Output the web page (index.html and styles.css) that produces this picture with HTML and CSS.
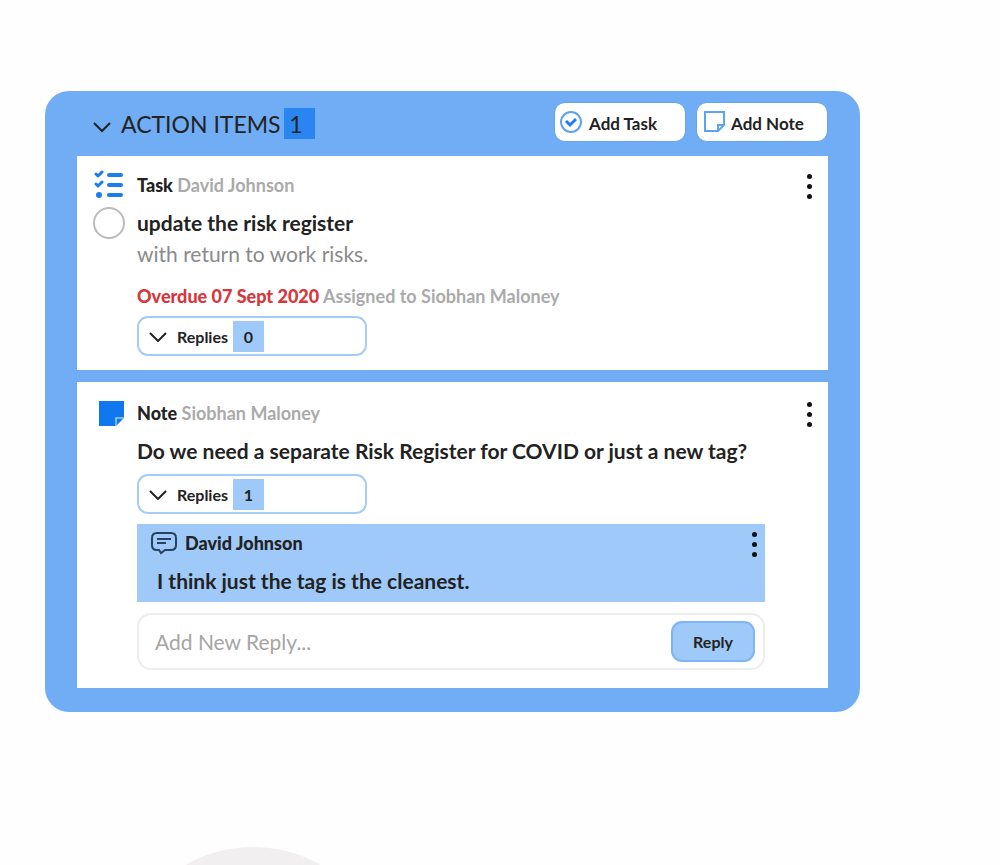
FILE: index.html
```
<!DOCTYPE html>
<html lang="en">
<head>
  <meta charset="UTF-8" />
  <meta name="viewport" content="width=device-width, initial-scale=1.0"/>
  <title>Action Items</title>
  <link rel="stylesheet" href="styles.css">
</head>
<body>

  <main class="panel">
    <header class="panel-header">
      <button class="toggle" aria-label="Collapse action items">
        <svg width="18" height="12" viewBox="0 0 18 12"><path d="M1 2 L9 10 L17 2"/></svg>
      </button>
      <h1>ACTION ITEMS</h1>
      <span class="count count-total">1</span>
      <div class="actions">
        <button class="add-btn">
          <svg class="outline" width="24" height="24" viewBox="0 0 24 24">
            <circle cx="12" cy="11" r="10"/>
            <path class="thick" d="M7 10 L11 14 L17 8"/>
          </svg>
          Add Task
        </button>
        <button class="add-btn">
          <svg class="outline" width="24" height="24" viewBox="0 0 24 24">
            <path d="M4 1 H23 V14 L17 20 H4 Z"/>
            <path d="M17 20 V14 H23"/>
          </svg>
          Add Note
        </button>
      </div>
    </header>

    <!-- Task -->
    <section class="card">
      <svg class="card-icon" width="30" height="30" viewBox="0 0 30 30">
        <g fill="none" stroke="#1a7df0" stroke-linecap="round" stroke-linejoin="round">
          <path stroke-width="3" d="M2 4 L4 6 L8 2 M2 14 L4 16 L8 12"/>
          <path stroke-width="4" d="M15 5 H27 M15 15 H27 M15 25 H27"/>
        </g>
        <circle cx="5" cy="25" r="3" fill="#1a7df0"/>
      </svg>
      <div class="byline"><b>Task</b> David Johnson</div>
      <button class="menu" aria-label="Task menu"><i></i><i></i><i></i></button>

      <input type="checkbox" class="done" id="task1">
      <label class="title" for="task1">update the risk register</label>
      <p class="desc">with return to work risks.</p>
      <p class="due"><b>Overdue 07 Sept 2020</b> Assigned to Siobhan Maloney</p>
      <button class="replies">
        <svg width="18" height="12" viewBox="0 0 18 12"><path d="M1 3 L9 11 L17 3"/></svg>
        Replies <span class="count">0</span>
      </button>
    </section>

    <!-- Note -->
    <section class="card card-note">
      <svg class="card-icon" width="30" height="30" viewBox="0 0 30 30">
        <path fill="#0f78ef" d="M5 3 H30 V20 L22 28 H5 Z"/>
        <path fill="none" stroke="#9fc9f8" stroke-width="1.5" d="M22 28 V20 H30"/>
      </svg>
      <div class="byline"><b>Note</b> Siobhan Maloney</div>
      <button class="menu" aria-label="Note menu"><i></i><i></i><i></i></button>

      <h2 class="title">Do we need a separate Risk Register for COVID or just a new tag?</h2>
      <button class="replies">
        <svg width="18" height="12" viewBox="0 0 18 12"><path d="M1 3 L9 11 L17 3"/></svg>
        Replies <span class="count">1</span>
      </button>

      <article class="reply">
        <div class="reply-head">
          <svg width="26" height="24" viewBox="0 0 26 24">
            <path d="M6 2 H20 Q25 2 25 7 V14 Q25 19 20 19 H14 L10 22 L8 19 H6 Q1 19 1 14 V7 Q1 2 6 2 Z"/>
            <path d="M6 8 H20 M6 12 H15"/>
          </svg>
          <b>David Johnson</b>
          <button class="menu" aria-label="Reply menu"><i></i><i></i><i></i></button>
        </div>
        <p>I think just the tag is the cleanest.</p>
      </article>

      <form class="new-reply">
        <input type="text" placeholder="Add New Reply..." aria-label="Add new reply">
        <button type="button">Reply</button>
      </form>
    </section>
  </main>

  <footer class="footer">
    <div class="circle"></div>
  </footer>

</body>
</html>
```
FILE: styles.css
```
* {
  box-sizing: border-box;
}

body {
  display: flex;
  flex-direction: column;
  min-height: 100vh;
  margin: 0;
  background: #fefefe;
  color: #222;
  font-family: Lato, "Liberation Sans", sans-serif;
}

h1, h2, p {
  margin: 0;
}

button {
  padding: 0;
  border: none;
  background: none;
  color: inherit;
  font-family: inherit;
  cursor: pointer;
}

.panel {
  margin: 91px 140px 0 45px;
  padding: 0 32px 24px;
  border-radius: 24px;
  background: #70adf4;
}

.panel-header {
  display: flex;
  align-items: center;
  height: 65px;
  padding-left: 16px;
}

.toggle svg,
.replies svg,
.reply-head svg {
  display: block;
  fill: none;
  stroke: #222;
  stroke-width: 2;
}

.reply-head svg {
  stroke: #26425f;
}

.toggle {
  padding-top: 6px;
}

h1 {
  margin-left: 10px;
  font-size: 23px;
  font-weight: 400;
}

.count {
  display: flex;
  align-items: center;
  justify-content: center;
  width: 31px;
  height: 31px;
  background: #9fc9f8;
  font-weight: 700;
}

.count-total {
  margin-left: 3px;
  padding-right: 6px;
  background: #2986f0;
  font-size: 23px;
  font-weight: 400;
}

.actions {
  display: flex;
  gap: 10px;
  margin-left: auto;
  padding-bottom: 4px;
}

.add-btn {
  display: flex;
  align-items: center;
  gap: 6px;
  width: 132px;
  height: 40px;
  padding: 3px 0 0 4px;
  border: 1px solid #64a5f3;
  border-radius: 11px;
  background: #fff;
  font-size: 17px;
  font-weight: 700;
}

.outline {
  fill: none;
  stroke: #5ea2f5;
  stroke-width: 2;
}

.outline .thick {
  stroke: #1a7df0;
  stroke-width: 3;
}

.card {
  display: grid;
  grid-template-columns: 60px 1fr 63px;
  padding: 12px 0 14px;
  background: #fff;
}

.card-note {
  margin-top: 12px;
  padding: 14px 0 18px;
}

.card-icon {
  align-self: center;
  margin-left: 17px;
}

.byline {
  color: #aaa;
  font-size: 18px;
  font-weight: 700;
  line-height: 34px;
}

.byline b {
  color: #222;
  font-weight: 900;
}

.menu {
  display: flex;
  flex-direction: column;
  align-items: center;
  justify-content: center;
  gap: 5px;
  width: 10px;
  margin-left: auto;
  margin-right: 14px;
  padding-top: 2px;
}

.menu i {
  width: 5px;
  height: 5px;
  border-radius: 50%;
  background: #111;
}

.done {
  appearance: none;
  align-self: center;
  width: 32px;
  height: 32px;
  margin: 4px 0 0 16px;
  border: 2px solid #bbb;
  border-radius: 50%;
}

.title {
  grid-column: 2 / 4;
  margin-top: 4px;
  font-size: 21px;
  font-weight: 700;
  line-height: 34px;
}

.desc,
.due,
.replies,
.reply,
.new-reply {
  grid-column: 2;
}

.desc {
  color: #8a8a8a;
  font-size: 21px;
  line-height: 28px;
}

.due {
  margin-top: 14px;
  color: #aaa;
  font-size: 18px;
  font-weight: 700;
  line-height: 28px;
}

.due b {
  color: #d8363b;
  font-weight: 900;
}

.replies {
  display: flex;
  align-items: center;
  width: 230px;
  height: 40px;
  margin-top: 6px;
  padding-left: 10px;
  border: 2px solid #a6ccfa;
  border-radius: 11px;
  font-size: 16px;
  font-weight: 700;
}

.replies svg {
  margin-right: 10px;
}

.replies .count {
  margin-left: 5px;
}

.reply {
  height: 78px;
  margin-top: 10px;
  padding-left: 14px;
  background: #9fc9f8;
  font-weight: 700;
}

.reply-head {
  display: flex;
  align-items: center;
  height: 38px;
}

.reply-head b {
  margin-left: 8px;
  font-size: 18px;
  font-weight: 900;
}

.reply-head .menu {
  margin-right: 6px;
}

.reply p {
  padding-left: 6px;
  font-size: 21px;
  line-height: 38px;
}

.new-reply {
  display: flex;
  align-items: center;
  height: 57px;
  margin-top: 11px;
  padding: 0 8px 0 16px;
  border: 2px solid #ededed;
  border-radius: 14px;
}

.new-reply input {
  flex: 1;
  min-width: 0;
  padding: 0;
  border: none;
  outline: none;
  background: none;
  font-family: inherit;
  font-size: 21px;
}

.new-reply input::placeholder {
  color: #a5a5a5;
}

.new-reply button {
  width: 84px;
  height: 41px;
  border: 2px solid #7fb4f6;
  border-radius: 11px;
  background: #9fc9f8;
  font-size: 16px;
  font-weight: 700;
}

/* only the top of the circle shows above the fold */
.footer {
  height: 18px;
  margin-top: auto;
  overflow: hidden;
}

.circle {
  width: 272px;
  height: 272px;
  margin-left: 117px;
  border-radius: 50%;
  background: #f1eff0;
}
```
